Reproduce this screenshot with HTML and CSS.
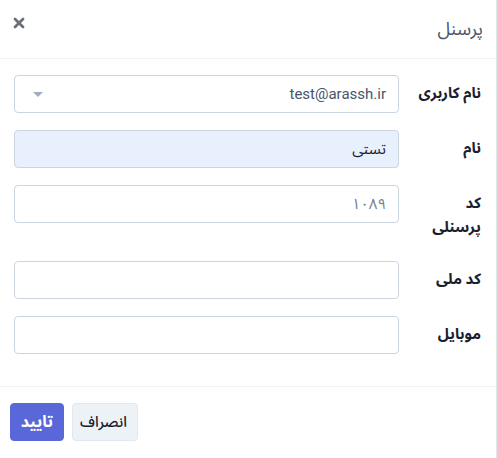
FILE: index.html
```html
<!DOCTYPE html>
<html lang="fa" dir="rtl">
<head>
<meta charset="utf-8">
<title>پرسنل</title>
<link rel="stylesheet" href="styles.css">
</head>
<body>
<div class="modal">
  <header class="modal-header">
    <h1 class="modal-title">پرسنل</h1>
    <button class="close" aria-label="close">
      <svg width="12" height="12" viewBox="0 0 12 12"><path d="M2 2 L10 10 M10 2 L2 10" stroke="#6b6f76" stroke-width="2.8" stroke-linecap="round"/></svg>
    </button>
  </header>
  <div class="modal-body">
    <div class="row">
      <label class="label">نام کاربری</label>
      <div class="field select">
        <span class="select-value">test@arassh.ir</span>
        <svg class="caret" width="10" height="5" viewBox="0 0 10 5"><path d="M0 0 H10 L5 5 Z" fill="#a0aec0"/></svg>
      </div>
    </div>
    <div class="row">
      <label class="label">نام</label>
      <input class="field input autofill" value="تستی">
    </div>
    <div class="row">
      <label class="label">کد<br>پرسنلی</label>
      <input class="field input muted" value="۱۰۸۹">
    </div>
    <div class="row">
      <label class="label">کد ملی</label>
      <input class="field input" value="">
    </div>
    <div class="row">
      <label class="label">موبایل</label>
      <input class="field input" value="">
    </div>
  </div>
  <footer class="modal-footer">
    <button class="btn btn-secondary">انصراف</button>
    <button class="btn btn-primary">تایید</button>
  </footer>
</div>
</body>
</html>
```
FILE: styles.css
```css
* { box-sizing: border-box; }
html, body { margin: 0; padding: 0; background: #fff; }
body {
  font-family: Roboto, "Noto Sans Arabic", "DejaVu Sans", sans-serif;
  color: #1a202c;
}
.modal {
  width: 497px;
  height: 458px;
  border-right: 1px solid #e2e8f0;
  display: flex;
  flex-direction: column;
  overflow: hidden;
}
.modal-header {
  height: 59px;
  border-bottom: 1px solid #edf2f7;
  display: flex;
  align-items: flex-start;
  justify-content: space-between;
  padding: 0 13px 0 12px;
}
.modal-title {
  margin: 16px 0 0;
  font-size: 18px;
  font-weight: 400;
  color: #4a5568;
  line-height: 26px;
}
.close {
  background: none;
  border: 0;
  padding: 0;
  margin-top: 16px;
  width: 14px;
  height: 14px;
  display: flex;
  align-items: center;
  justify-content: center;
}
.modal-body {
  padding: 16px 15px 16px 14px;
  display: flex;
  flex-direction: column;
  gap: 17px;
  border-bottom: 1px solid #edf2f7;
  height: 328px;
}
.row {
  display: flex;
  align-items: flex-start;
  gap: 12px;
}
.label {
  width: 70px;
  flex: none;
  font-size: 15px;
  font-weight: 700;
  line-height: 24px;
  padding: 6px 0 5px;
  color: #1a202c;
}
.field {
  flex: 1;
  height: 38px;
  border: 1px solid #cbd5e0;
  border-radius: 4px;
  background: #fff;
  font-family: inherit;
  font-size: 15px;
  color: #2d3748;
}
.input {
  padding: 0 12px;
  outline: none;
  direction: rtl;
}
.autofill { background: #e8f0fe; color: #1a202c; }
.muted { color: #718096; }
.select {
  display: flex;
  align-items: center;
  justify-content: space-between;
  padding: 0 12px 0 18px;
}
.select-value { font-size: 15px; color: #4a5568; }
.caret { display: block; }
.modal-footer {
  flex: 1;
  display: flex;
  justify-content: flex-end;
  align-items: flex-start;
  gap: 8px;
  padding: 16px 10px 0;
}
.btn {
  height: 38px;
  border-radius: 4px;
  font-family: inherit;
  font-size: 15px;
  font-weight: 500;
  padding: 0 10px;
  cursor: pointer;
}
.btn-secondary {
  background: #edf2f7;
  border: 1px solid #e2e8f0;
  color: #1a202c;
  width: 66px;
}
.btn-primary {
  background: #5a67d8;
  border: 1px solid #5a67d8;
  color: #fff;
  font-weight: 700;
  font-size: 16px;
  width: 54px;
}
```
